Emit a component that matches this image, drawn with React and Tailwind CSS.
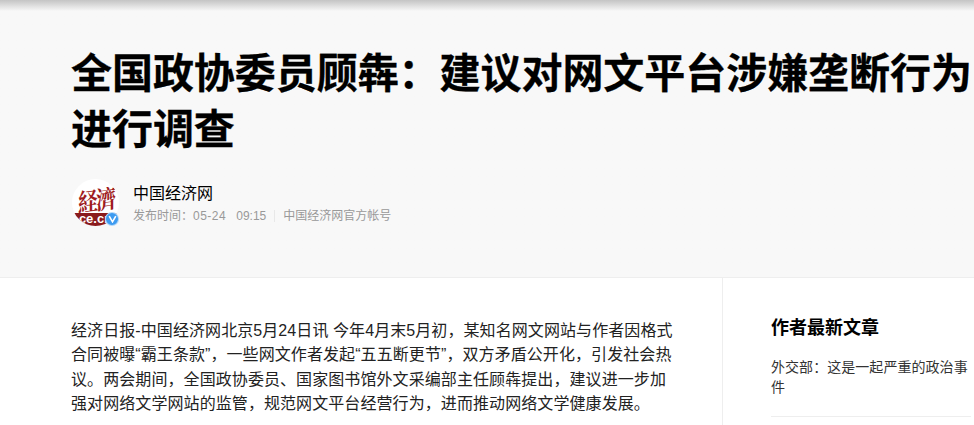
const cjk = "font-['Liberation_Sans','Noto_Sans_CJK_SC',sans-serif]";

const Avatar = () => (
    <div className="relative w-[47px] h-[47px] shrink-0">
        <div className="w-full h-full rounded-full bg-white overflow-hidden flex flex-col items-center">
            <div className="h-[34px] pt-[6px] flex items-center text-[#9e1b20] text-[20px] leading-none font-bold tracking-[-2px] -skew-y-6 scale-y-125 whitespace-nowrap font-['Noto_Serif_CJK_TC','Noto_Sans_CJK_TC',serif]">
                経濟
            </div>
            <div className="w-full h-[13px] bg-[#8a1a1c] text-white text-[13px] leading-[12px] font-bold text-center font-['Liberation_Sans',sans-serif] whitespace-nowrap">
                ce.cn
            </div>
        </div>
        <div className="absolute right-0 bottom-0 w-[14px] h-[14px] rounded-full bg-[#3d9bf0] border border-white/60 flex items-center justify-center">
            <svg width="9" height="8" viewBox="0 0 9 8" fill="none">
                <path d="M1.2 1.2 L4.5 6.8 L7.8 1.2" stroke="#fff" strokeWidth="1.6" />
            </svg>
        </div>
    </div>
);

export default function App() {
    return (
        <div className={`w-[974px] h-[425px] overflow-hidden bg-white ${cjk}`}>
            <header className="h-[278px] bg-[#f8f8f8] border-b border-[#eeeeee] pl-[71px] pt-[46px] bg-gradient-to-b from-[#c4c4c4] via-[#f8f8f8] via-[4%] to-[#f8f8f8]">
                <h1 className="w-[902px] text-[41px] leading-[56px] font-bold text-black tracking-[-0.05px] [-webkit-text-stroke:0.3px_#000]">
                    全国政协委员顾犇：建议对网文平台涉嫌垄断行为进行调查
                </h1>
                <div className="flex items-center gap-[15px] mt-[21px] ml-px">
                    <Avatar />
                    <div className="flex flex-col pt-[4px]">
                        <div className="text-[16px] leading-[20px] text-black -ml-px">中国经济网</div>
                        <div className="mt-[3px] flex items-center text-[12px] leading-[18px] text-[#999999] whitespace-nowrap -ml-px">
                            <span>发布时间：<span className="tracking-[0.5px]">05-24</span></span>
                            <span className="ml-[10px]">09:15</span>
                            <span className="ml-[8px] mr-[8px] w-px h-[12px] bg-[#e8e8e8]" />
                            <span>中国经济网官方帐号</span>
                        </div>
                    </div>
                </div>
            </header>
            <main className="flex h-[147px]">
                <article className="w-[723px] shrink-0 border-r border-[#eeeeee] pl-[71px] pr-[46px] pt-[41px]">
                    <p className="text-[16px] leading-[24.33px] text-[#222222] tracking-[0.08px]">
                        经济日报-中国经济网北京5月24日讯 今年4月末5月初，某知名网文网站与作者因格式合同被曝“霸王条款”，一些网文作者发起“五五断更节”，双方矛盾公开化，引发社会热议。两会期间，全国政协委员、国家图书馆外文采编部主任顾犇提出，建议进一步加强对网络文学网站的监管，规范网文平台经营行为，进而推动网络文学健康发展。
                    </p>
                </article>
                <aside className="flex-1 pl-[48px] pt-[37px]">
                    <h2 className="text-[18px] leading-[26px] font-bold text-black">作者最新文章</h2>
                    <div className="mt-[16px] w-[200px] pb-[19px] border-b border-[#eeeeee] text-[14px] leading-[20px] text-[#333333] tracking-[0.05px]">
                        外交部：这是一起严重的政治事件
                    </div>
                </aside>
            </main>
        </div>
    );
}
